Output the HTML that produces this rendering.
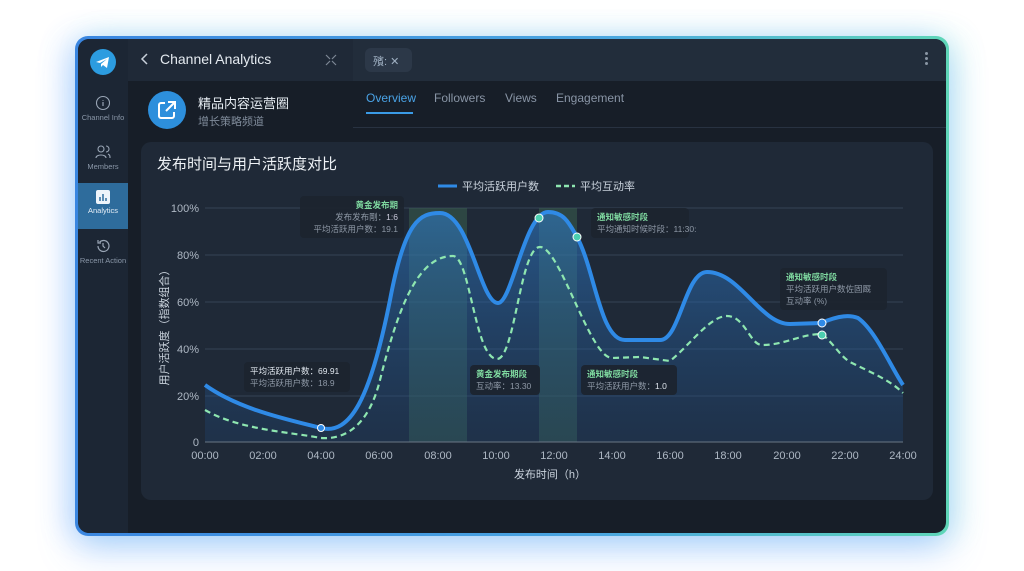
<!DOCTYPE html>
<html><head><meta charset="utf-8"><style>
*{margin:0;padding:0;box-sizing:border-box}
body{width:1024px;height:571px;background:#fff;position:relative;overflow:hidden;font-family:"Liberation Sans","Noto Sans CJK SC",sans-serif}
.glow{position:absolute;left:75px;top:36px;width:874px;height:500px;border-radius:13px;box-shadow:0 14px 36px rgba(80,150,255,.35),10px 0 28px rgba(80,230,190,.18),-10px 0 28px rgba(80,150,255,.18)}
.frame{position:absolute;left:75px;top:36px;width:874px;height:500px;border-radius:13px;background:linear-gradient(90deg,#3a86e0,#4aa6e0 60%,#5fd6b8);padding:3px}
.in{position:relative;width:100%;height:100%;border-radius:11px;background:#171e28;overflow:hidden}
.side{position:absolute;left:0;top:0;width:50px;height:100%;background:#1c2634}
.si{position:absolute;left:0;width:50px;text-align:center;color:#8a97a8;font-size:7.5px}
.hdrL{position:absolute;left:50px;top:0;width:225px;height:42px;background:#1f2937}
.hdrR{position:absolute;left:275px;top:0;right:0;height:42px;background:#222d3b}
.tabs{position:absolute;left:275px;top:42px;right:0;height:47px;border-bottom:1px solid #283241}
.tab{position:absolute;top:10px;font-size:12px;color:#8995a6}
.card{position:absolute;left:63px;top:103px;width:792px;height:358px;background:#1f2937;border-radius:10px}
.tt{position:absolute;background:rgba(28,36,47,.92);border-radius:4px;font-size:8.5px;line-height:12px;color:#8e98a6;padding:3px 6px;white-space:nowrap}
.tt b{color:#7fd9a0;font-weight:bold}
</style></head><body>
<div class="glow"></div>
<div class="frame"><div class="in">
<div class="side">
 <div style="position:absolute;left:12px;top:10px;width:26px;height:26px;border-radius:50%;background:#2c9ce0"><svg width="26" height="26" viewBox="0 0 26 26"><path d="M6 13 L19 8 L17 19 L13 16 L11 18 L11 15 L17 10 L10 14 Z" fill="#fff"/></svg></div>
 <div class="si" style="top:56px"><svg width="16" height="16" viewBox="0 0 16 16"><circle cx="8" cy="8" r="6.5" fill="none" stroke="#9aa6b6" stroke-width="1.1"/><path d="M8 7v4M8 5v.8" stroke="#9aa6b6" stroke-width="1.2"/></svg><br>Channel Info</div>
 <div class="si" style="top:105px"><svg width="18" height="16" viewBox="0 0 18 16"><circle cx="7" cy="5" r="3" fill="none" stroke="#9aa6b6" stroke-width="1.1"/><path d="M2 14c0-4 10-4 10 0M12 2a3 3 0 0 1 0 6M14 10c2 1 2 2 2 4" fill="none" stroke="#9aa6b6" stroke-width="1.1"/></svg><br>Members</div>
 <div style="position:absolute;left:0;top:144px;width:50px;height:46px;background:#2e6c9c"></div>
 <div class="si" style="top:151px;color:#e6eef6"><svg width="14" height="14" viewBox="0 0 14 14"><rect width="14" height="14" rx="2" fill="#eef4fa"/><path d="M4 11V7M7 11V4M10 11V8" stroke="#2e6c9c" stroke-width="1.5"/></svg><br>Analytics</div>
 <div class="si" style="top:199px"><svg width="16" height="16" viewBox="0 0 16 16"><path d="M3 8a5.5 5.5 0 1 0 1.6-3.9M3 2v3h3M8 5v3l2 2" fill="none" stroke="#9aa6b6" stroke-width="1.2"/></svg><br>Recent Action</div>
</div>
<div class="hdrL">
 <svg style="position:absolute;left:12px;top:13px" width="10" height="14"><path d="M7 2 L2 7 L7 12" fill="none" stroke="#c8d0da" stroke-width="1.5"/></svg>
 <div style="position:absolute;left:32px;top:12px;color:#e4eaf0;font-size:14px">Channel Analytics</div>
 <svg style="position:absolute;left:196px;top:14px" width="14" height="14"><path d="M2 2l4 4M12 2l-4 4M2 12l4-4M12 12l-4-4" stroke="#7d8896" stroke-width="1.2"/></svg>
</div>
<div class="hdrR">
 <div style="position:absolute;left:12px;top:9px;width:47px;height:24px;background:#2c3848;border-radius:6px;color:#9fb0c2;font-size:11px;padding:5px 8px">殯: ✕</div>
 <div style="position:absolute;right:18px;top:13px;width:3px"><div style="width:3px;height:3px;background:#8a96a4;border-radius:50%;margin-bottom:2px"></div><div style="width:3px;height:3px;background:#8a96a4;border-radius:50%;margin-bottom:2px"></div><div style="width:3px;height:3px;background:#8a96a4;border-radius:50%"></div></div>
</div>
<div style="position:absolute;left:70px;top:52px;width:38px;height:38px;border-radius:50%;background:#2d8fdc"><svg width="38" height="38" viewBox="0 0 38 38"><path d="M17 12h-4a2 2 0 0 0-2 2v11a2 2 0 0 0 2 2h11a2 2 0 0 0 2-2v-4M20 11h7v7M27 11l-9 9" fill="none" stroke="#fff" stroke-width="2"/></svg></div>
<div style="position:absolute;left:120px;top:54px;color:#e6ecf2;font-size:13px">精品内容运营圈</div>
<div style="position:absolute;left:120px;top:74px;color:#7f8b9a;font-size:11px">增长策略频道</div>
<div class="tabs">
 <div class="tab" style="left:13px;color:#4aa3e6">Overview</div>
 <div style="position:absolute;left:13px;top:31px;width:47px;height:2px;background:#3a9be6"></div>
 <div class="tab" style="left:81px">Followers</div>
 <div class="tab" style="left:152px">Views</div>
 <div class="tab" style="left:203px">Engagement</div>
</div>
<div class="card"></div>
</div></div>
<svg style="position:absolute;left:0;top:0" width="1024" height="571">
<defs><linearGradient id="fa" x1="0" y1="0" x2="0" y2="1"><stop offset="0" stop-color="#2f7fd0" stop-opacity=".55"/><stop offset="1" stop-color="#1e4a80" stop-opacity=".25"/></linearGradient></defs>
<text x="157" y="169" fill="#eef2f6" font-size="15" font-family="Liberation Sans,Noto Sans CJK SC,sans-serif">发布时间与用户活跃度对比</text>
<g font-family="Liberation Sans,Noto Sans CJK SC,sans-serif" font-size="11" fill="#c9d2dc">
<line x1="438" y1="186" x2="457" y2="186" stroke="#2f8ae6" stroke-width="3"/><text x="462" y="190">平均活跃用户数</text>
<line x1="556" y1="186" x2="575" y2="186" stroke="#8ee6b0" stroke-width="2.5" stroke-dasharray="5 3"/><text x="580" y="190">平均互动率</text>
</g>
<g stroke="#354254" stroke-width="1"><line x1="205" y1="208" x2="903" y2="208"/><line x1="205" y1="255" x2="903" y2="255"/><line x1="205" y1="302" x2="903" y2="302"/><line x1="205" y1="349" x2="903" y2="349"/><line x1="205" y1="396" x2="903" y2="396"/></g>
<rect x="409" y="208" width="58" height="234" fill="#3f6a52" opacity=".45"/>
<rect x="539" y="208" width="38" height="234" fill="#3f6a52" opacity=".45"/>
<path d="M205,385 C240,410 290,420 321,428 C350,435 370,400 390,300 C405,220 420,213 440,213 C470,213 480,303 498,303 C512,303 525,212 548,212 C565,212 570,225 577,237 C595,270 600,340 625,340 L660,340 C680,340 685,272 707,272 C740,272 760,324 790,324 L821,323 C840,315 850,315 858,318 C875,330 890,365 903,385 L903,442 L205,442 Z" fill="url(#fa)"/>
<path d="M205,410 C240,430 290,432 321,438 C350,440 370,420 380,380 C400,300 420,256 453,256 C470,256 475,359 497,359 C515,359 520,247 540,247 C560,247 590,358 612,358 L640,357 L670,361 C690,345 710,316 727,316 C745,316 750,345 762,345 C785,345 800,334 822,334 C835,345 840,356 850,362 C870,372 890,380 903,393" fill="none" stroke="#8ee6b0" stroke-width="2.2" stroke-dasharray="6 4"/>
<path d="M205,385 C240,410 290,420 321,428 C350,435 370,400 390,300 C405,220 420,213 440,213 C470,213 480,303 498,303 C512,303 525,212 548,212 C565,212 570,225 577,237 C595,270 600,340 625,340 L660,340 C680,340 685,272 707,272 C740,272 760,324 790,324 L821,323 C840,315 850,315 858,318 C875,330 890,365 903,385" fill="none" stroke="#2f8ae6" stroke-width="4"/>
<line x1="205" y1="442" x2="903" y2="442" stroke="#6a7685"/>
<circle cx="321" cy="428" r="3.5" fill="#2f8ae6" stroke="#fff" stroke-width="1"/>
<circle cx="539" cy="218" r="4" fill="#4ccfb0" stroke="#fff" stroke-width="1"/>
<circle cx="577" cy="237" r="4" fill="#4ccfb0" stroke="#fff" stroke-width="1"/>
<circle cx="822" cy="323" r="4" fill="#2f8ae6" stroke="#fff" stroke-width="1"/>
<circle cx="822" cy="335" r="4" fill="#4ccfb0" stroke="#fff" stroke-width="1"/>
<g font-family="Liberation Sans,sans-serif" font-size="11" fill="#aeb8c4" text-anchor="end">
<text x="199" y="212">100%</text><text x="199" y="259">80%</text><text x="199" y="306">60%</text><text x="199" y="353">40%</text><text x="199" y="400">20%</text><text x="199" y="446">0</text></g>
<g font-family="Liberation Sans,sans-serif" font-size="11" fill="#aeb8c4" text-anchor="middle">
<text x="205" y="459">00:00</text><text x="263" y="459">02:00</text><text x="321" y="459">04:00</text><text x="379" y="459">06:00</text><text x="438" y="459">08:00</text><text x="496" y="459">10:00</text><text x="554" y="459">12:00</text><text x="612" y="459">14:00</text><text x="670" y="459">16:00</text><text x="728" y="459">18:00</text><text x="787" y="459">20:00</text><text x="845" y="459">22:00</text><text x="903" y="459">24:00</text>
<text x="550" y="478" font-family="Liberation Sans,Noto Sans CJK SC,sans-serif" fill="#c9d2dc">发布时间（h）</text>
<text transform="translate(168,325) rotate(-90)" font-family="Liberation Sans,Noto Sans CJK SC,sans-serif" fill="#c9d2dc">用户活跃度（指数组合）</text></g>
</svg>
<div class="tt" style="left:300px;top:196px;width:104px;text-align:right"><b>黄金发布期</b><br>发布发布剛：<span style="color:#ccd">1:6</span><br>平均活跃用户数：19.1</div>
<div class="tt" style="left:244px;top:362px;width:106px"><span style="color:#dfe6ee">平均活跃用户数：69.91</span><br>平均活跃用户数：18.9</div>
<div class="tt" style="left:470px;top:365px;width:70px"><b>黄金发布期段</b><br>互动率：13.30</div>
<div class="tt" style="left:591px;top:208px;width:98px"><b>通知敏感时段</b><br>平均通知时候时段：11:30:</div>
<div class="tt" style="left:581px;top:365px;width:96px"><b>通知敏感时段</b><br>平均活跃用户数：<span style="color:#dfe6ee">1.0</span></div>
<div class="tt" style="left:780px;top:268px;width:107px"><b>通知敏感时段</b><br>平均活跃用户数佐固厩<br>互动率 (%)</div>
</body></html>
